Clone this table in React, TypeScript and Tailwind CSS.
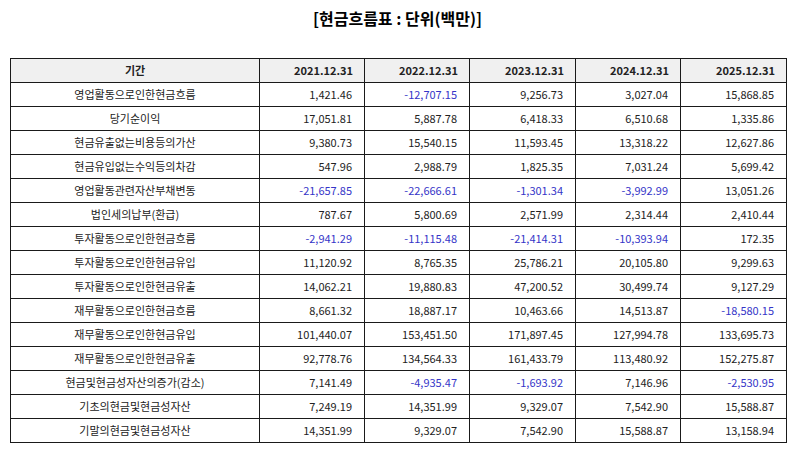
import React from "react";

const years = ["2021.12.31", "2022.12.31", "2023.12.31", "2024.12.31", "2025.12.31"];

const rows: [string, string[]][] = [
  ["영업활동으로인한현금흐름", ["1,421.46", "-12,707.15", "9,256.73", "3,027.04", "15,868.85"]],
  ["당기순이익", ["17,051.81", "5,887.78", "6,418.33", "6,510.68", "1,335.86"]],
  ["현금유출없는비용등의가산", ["9,380.73", "15,540.15", "11,593.45", "13,318.22", "12,627.86"]],
  ["현금유입없는수익등의차감", ["547.96", "2,988.79", "1,825.35", "7,031.24", "5,699.42"]],
  ["영업활동관련자산부채변동", ["-21,657.85", "-22,666.61", "-1,301.34", "-3,992.99", "13,051.26"]],
  ["법인세의납부(환급)", ["787.67", "5,800.69", "2,571.99", "2,314.44", "2,410.44"]],
  ["투자활동으로인한현금흐름", ["-2,941.29", "-11,115.48", "-21,414.31", "-10,393.94", "172.35"]],
  ["투자활동으로인한현금유입", ["11,120.92", "8,765.35", "25,786.21", "20,105.80", "9,299.63"]],
  ["투자활동으로인한현금유출", ["14,062.21", "19,880.83", "47,200.52", "30,499.74", "9,127.29"]],
  ["재무활동으로인한현금흐름", ["8,661.32", "18,887.17", "10,463.66", "14,513.87", "-18,580.15"]],
  ["재무활동으로인한현금유입", ["101,440.07", "153,451.50", "171,897.45", "127,994.78", "133,695.73"]],
  ["재무활동으로인한현금유출", ["92,778.76", "134,564.33", "161,433.79", "113,480.92", "152,275.87"]],
  ["현금및현금성자산의증가(감소)", ["7,141.49", "-4,935.47", "-1,693.92", "7,146.96", "-2,530.95"]],
  ["기초의현금및현금성자산", ["7,249.19", "14,351.99", "9,329.07", "7,542.90", "15,588.87"]],
  ["기말의현금및현금성자산", ["14,351.99", "9,329.07", "7,542.90", "15,588.87", "13,158.94"]],
];

const CashFlowTable = () => {
  return (
    <div className="w-[795px] h-[452px] bg-white font-['Noto_Sans_CJK_KR',sans-serif] text-[#222]">
      <div className="pt-[6px] h-[58px] text-center text-[16px] font-bold leading-[24px] text-black">
        [현금흐름표 : 단위(백만)]
      </div>
      <div className="px-[10px]">
        <table className="w-[776px] table-fixed border-collapse text-[11px]">
          <colgroup>
            <col className="w-[249px]" />
            <col className="w-[105px]" />
            <col className="w-[105px]" />
            <col className="w-[106px]" />
            <col className="w-[105px]" />
            <col className="w-[106px]" />
          </colgroup>
          <thead>
            <tr className="h-[24px] bg-[#f0f0f0]">
              <th className="border border-[#1a1a1a] text-center font-bold p-0">기간</th>
              {years.map((y) => (
                <th key={y} className="border border-[#1a1a1a] text-right font-bold pr-[11px] p-0">
                  {y}
                </th>
              ))}
            </tr>
          </thead>
          <tbody>
            {rows.map(([label, vals]) => (
              <tr key={label} className="h-[24px]">
                <td className="border border-[#1a1a1a] text-center p-0">{label}</td>
                {vals.map((v, i) => (
                  <td
                    key={i}
                    className={
                      v.startsWith("-")
                        ? "border border-[#1a1a1a] text-right pr-[12px] p-0 text-[#3535c8]"
                        : "border border-[#1a1a1a] text-right pr-[12px] p-0"
                    }
                  >
                    {v}
                  </td>
                ))}
              </tr>
            ))}
          </tbody>
        </table>
      </div>
    </div>
  );
};

export default function App() {
  return <CashFlowTable />;
}
